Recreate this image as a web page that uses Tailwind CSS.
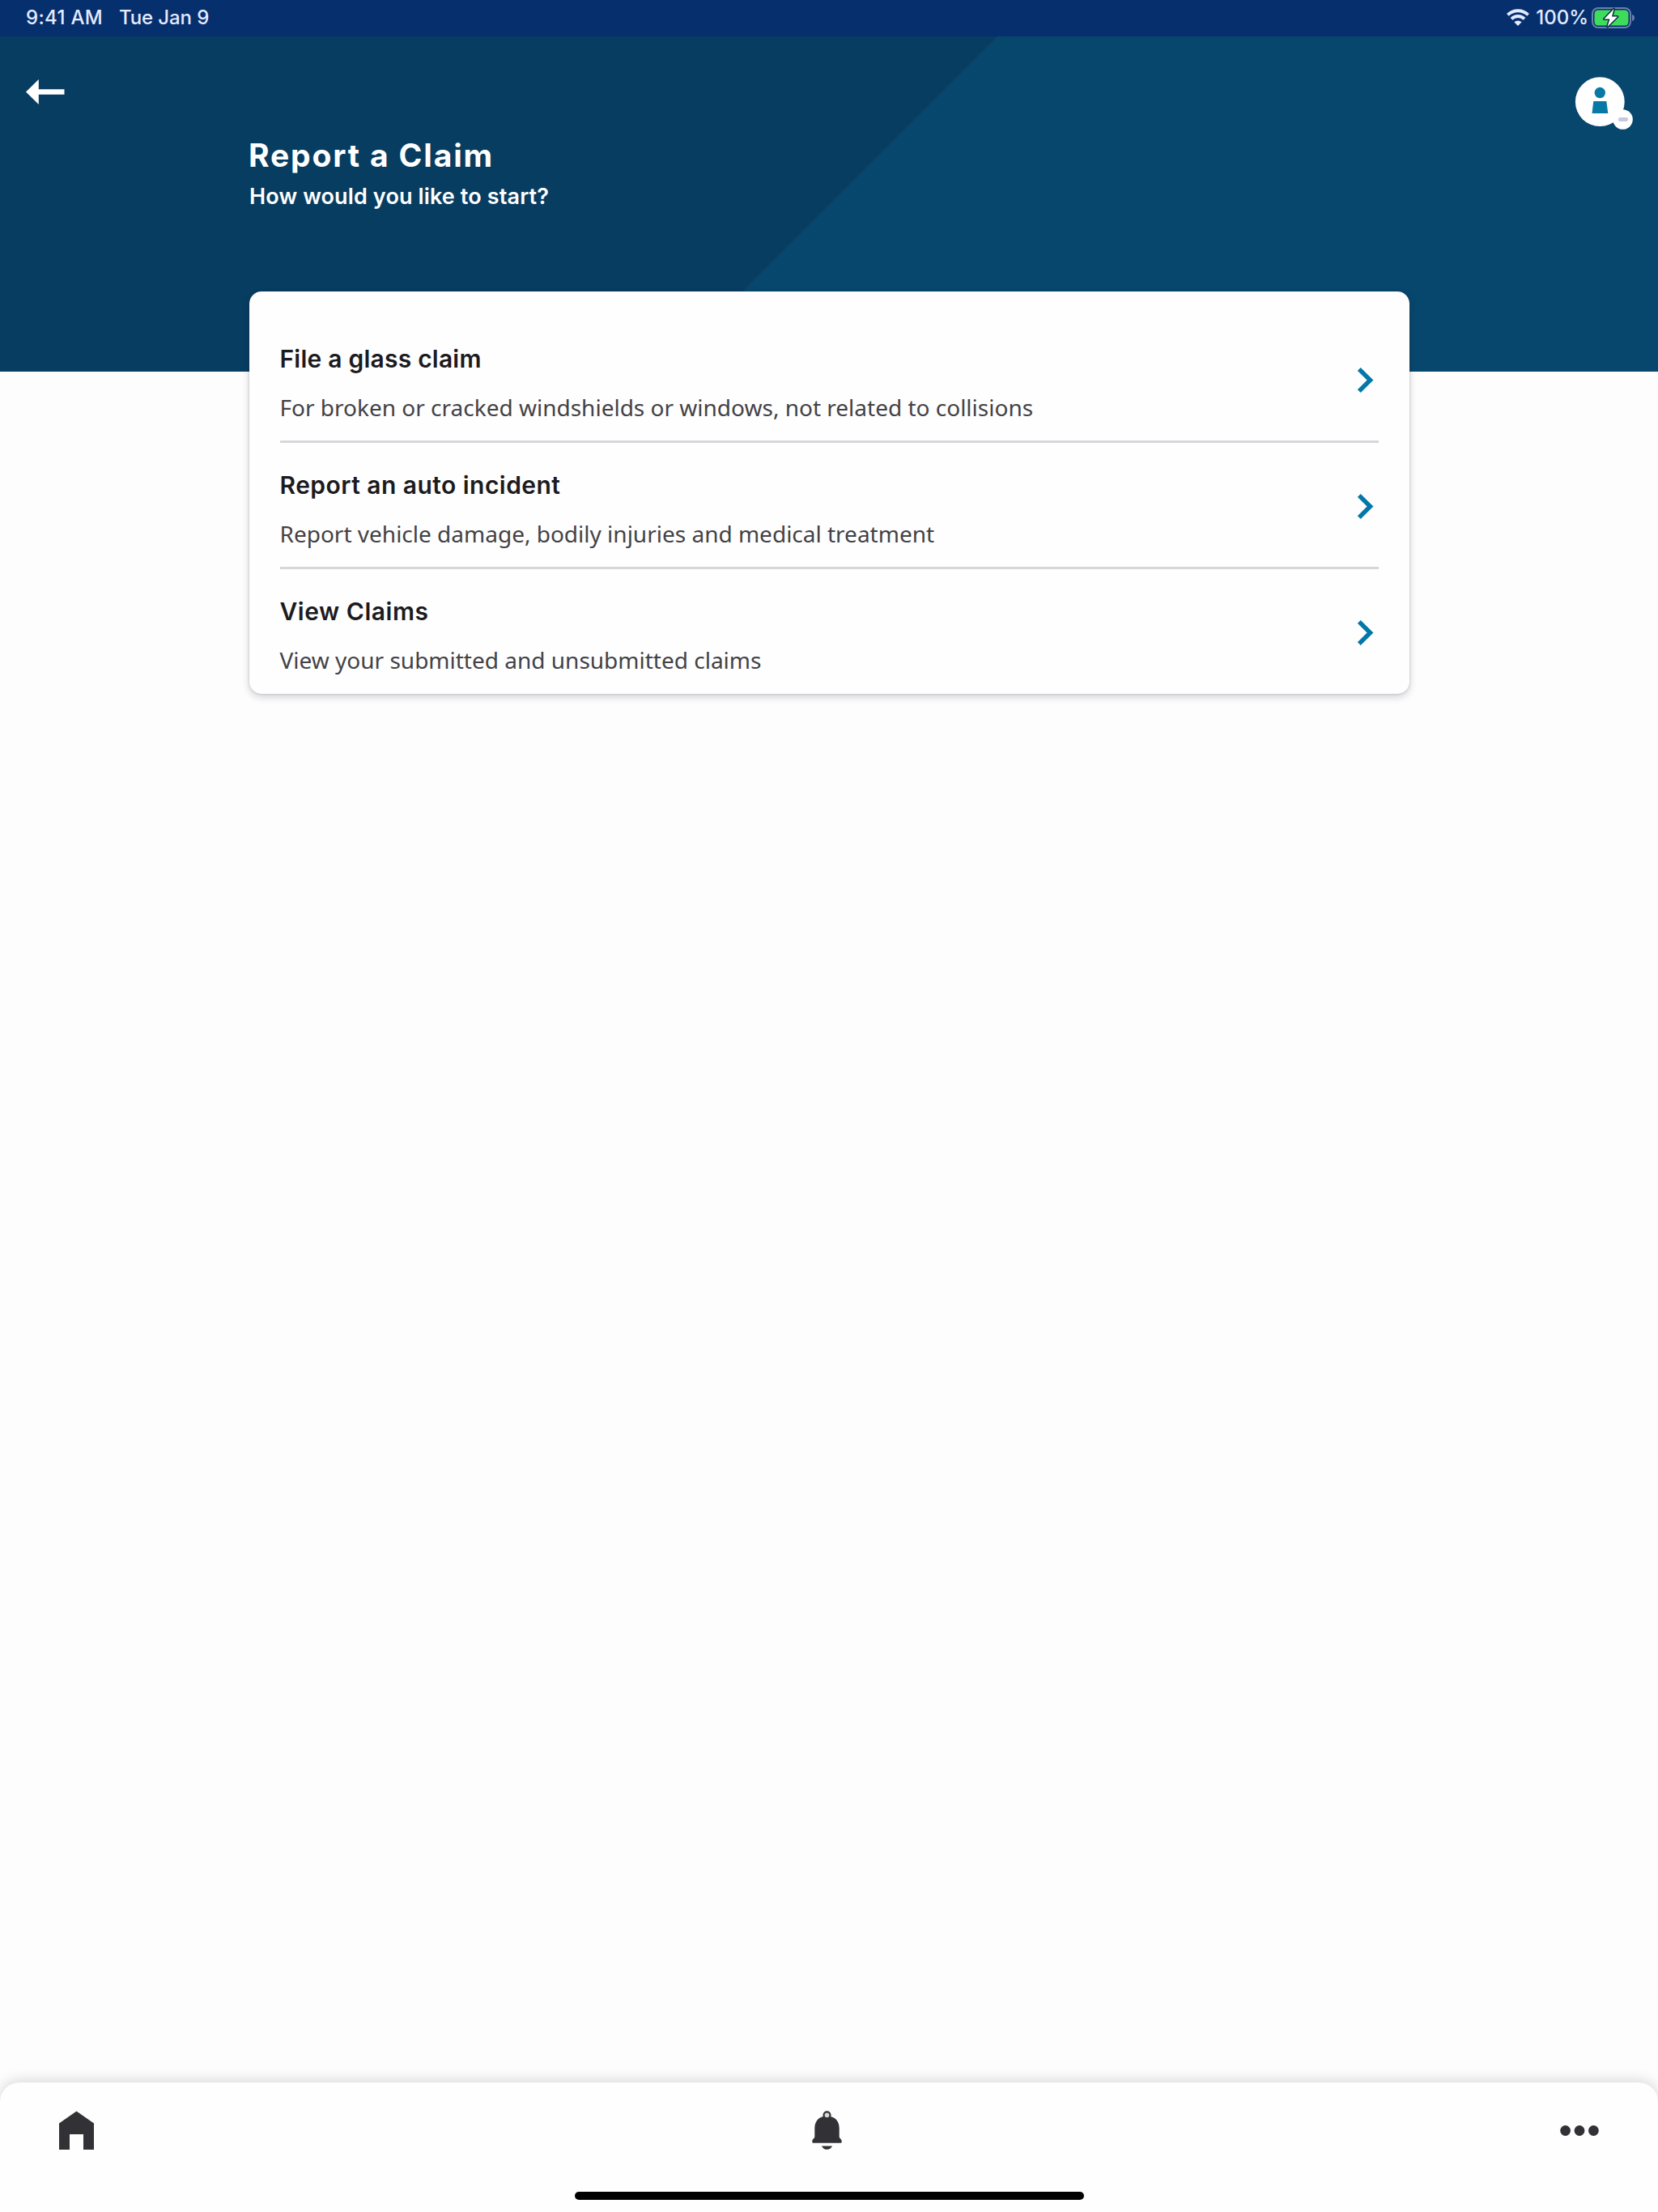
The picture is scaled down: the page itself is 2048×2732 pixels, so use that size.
<!DOCTYPE html>
<html lang="en">
<head>
<meta charset="utf-8">
<title>Report a Claim</title>
<script src="https://cdn.jsdelivr.net/npm/@tailwindcss/browser@4"></script>
</head>
<body class="bg-[#fdfdfd]">
<div class="flex flex-col w-[2048px] h-[2732px] overflow-hidden font-['Inter',sans-serif]">

  <!-- Status bar -->
  <div class="flex h-[45px] shrink-0 items-center justify-between bg-[#062f6e] pl-8 pr-[29px] pb-0.5 text-2xl leading-8 font-medium text-[#e3ebff]">
    <div class="flex gap-5">
      <span class="tracking-[0.3px]">9:41 AM</span>
      <span class="tracking-[-0.1px]">Tue Jan 9</span>
    </div>
    <div class="flex items-center">
      <svg class="w-[28px] h-[21px] mr-2" viewBox="0 0 28 21" fill="none" stroke="currentColor" stroke-width="3.8">
        <path d="M1.4 7.4a18 18 0 0 1 25.2 0"/>
        <path d="M6 12.3a11.4 11.4 0 0 1 16 0"/>
        <path d="M14 21l-4.6-4.7a6.6 6.6 0 0 1 9.2 0z" fill="currentColor" stroke="none"/>
      </svg>
      <span class="mr-1">100%</span>
      <svg class="w-[53px] h-[26px]" viewBox="0 0 53 26">
        <rect x="1" y="1" width="47" height="24" rx="7" fill="#062f6e" stroke="#6d7fae" stroke-width="2"/>
        <rect x="3.5" y="3.5" width="42" height="19" rx="4.5" fill="#3fdc5c"/>
        <path d="M50 9c2 .6 3 2 3 4s-1 3.400-3 4z" fill="#6d7fae"/>
        <path d="M27.500 2L15.500 14.500h7l-3 9.500L32 11.500h-7z" fill="#fff" stroke="#062f3e" stroke-width="3" paint-order="stroke" stroke-linejoin="round"/>
      </svg>
    </div>
  </div>

  <!-- Header -->
  <header class="relative flex h-[414px] shrink-0 bg-[#073d61] text-white">
    <svg class="absolute inset-0 h-full w-full" viewBox="0 0 2048 414"><path d="M1232 0H2048V414H818z" fill="#08476d"/></svg>
    <div class="relative w-[308px] pl-8 pt-[53px]">
      <svg class="h-[31px] w-[48px]" viewBox="0 0 48 31" fill="currentColor"><path d="M0 15.500L15.800 0V12.300H47.500V18.700H15.800V31z"/></svg>
    </div>
    <div class="relative flex-1 pt-[123px]">
      <h1 class="text-[39px] leading-[48px] font-bold tracking-[1.85px] -ml-px">Report a Claim</h1>
      <p class="mt-[9px] text-[27px] leading-9 font-semibold tracking-[0.13px]">How would you like to start?</p>
    </div>
    <div class="relative pt-[50px] pr-[30px]">
      <svg class="h-[66px] w-[73px]" viewBox="0 0 73 66">
        <circle cx="31.300" cy="30.700" r="30.400" fill="#fff"/>
        <circle cx="31.300" cy="19.500" r="6.700" fill="#0879a5"/>
        <path d="M23.300 30H39.300L41.300 45H21.500z" fill="#0879a5"/>
        <circle cx="59.500" cy="52.500" r="12.300" fill="#fff"/>
        <rect x="54" y="50" width="12" height="5" rx="2" fill="#c6c9dd"/>
      </svg>
    </div>
  </header>

  <!-- Claim options -->
  <main class="relative mx-auto -mt-[99px] w-[1433px] rounded-[15px] bg-[#fefefe] px-[38px] pt-[31px] shadow-[0_4px_10px_rgba(40,30,50,0.2),0_0_3px_rgba(40,30,50,0.2)]">
    <a class="flex items-center justify-between border-b-3 border-[#d8d6da] pt-8 pb-[21px]">
      <div>
        <h2 class="text-3xl leading-10 font-semibold tracking-[0.22px] text-[#1c1b1f]">File a glass claim</h2>
        <p class="mt-5 font-['Noto_Sans',sans-serif] text-[28px] leading-10 text-[#434246]">For broken or cracked windshields or windows, not related to collisions</p>
      </div>
      <svg class="mr-1.5 mb-[7px] h-[31px] w-[20px]" viewBox="0 0 20 31" fill="none" stroke="#0378a8" stroke-width="5.500"><path d="M1.800 2L15.500 15.500L1.800 29"/></svg>
    </a>
    <a class="flex items-center justify-between border-b-3 border-[#d8d6da] pt-8 pb-[21px]">
      <div>
        <h2 class="text-3xl leading-10 font-semibold tracking-[0.46px] text-[#1c1b1f]">Report an auto incident</h2>
        <p class="mt-5 font-['Noto_Sans',sans-serif] text-[28px] leading-10 text-[#434246]">Report vehicle damage, bodily injuries and medical treatment</p>
      </div>
      <svg class="mr-1.5 mb-[7px] h-[31px] w-[20px]" viewBox="0 0 20 31" fill="none" stroke="#0378a8" stroke-width="5.500"><path d="M1.800 2L15.500 15.500L1.800 29"/></svg>
    </a>
    <a class="flex items-center justify-between pt-8 pb-[22px]">
      <div>
        <h2 class="text-3xl leading-10 font-semibold tracking-[0.52px] text-[#1c1b1f]">View Claims</h2>
        <p class="mt-5 font-['Noto_Sans',sans-serif] text-[28px] leading-10 text-[#434246]">View your submitted and unsubmitted claims</p>
      </div>
      <svg class="mr-1.5 mb-[7px] h-[31px] w-[20px]" viewBox="0 0 20 31" fill="none" stroke="#0378a8" stroke-width="5.500"><path d="M1.800 2L15.500 15.500L1.800 29"/></svg>
    </a>
  </main>

  <!-- Tab bar -->
  <nav class="mt-auto flex h-[160px] shrink-0 flex-col items-center justify-between rounded-t-[24px] bg-[#fefefe] pt-[35px] pb-[15px] shadow-[0_-2px_16px_rgba(40,30,50,0.18)]">
    <div class="flex w-full items-center justify-between px-[73px] text-[#323135]">
      <svg class="h-[48px] w-[43px]" viewBox="0 0 43 48" fill="currentColor"><path d="M21.500 .5L43 15.500V48H30V29H13V48H0V15.500z"/></svg>
      <svg class="h-[48px] w-[37px]" viewBox="0 0 37 48" fill="currentColor">
        <path d="M18.500 6.500C8.500 6.500 3.300 13 3.300 21.500V32C3.300 34 .3 35 .3 37.500V38.500Q.3 39.800 1.600 39.800H35.400Q36.700 39.800 36.700 38.500V37.500C36.700 35 33.700 34 33.700 32V21.500C33.700 13 28.500 6.500 18.500 6.500z"/>
        <path d="M12 43.500H25C23.500 46.500 21.500 47.800 18.500 47.800S13.500 46.500 12 43.500z"/>
        <circle cx="18.500" cy="5.300" r="4" fill="#d8d8da" stroke="currentColor" stroke-width="2.200"/>
      </svg>
      <svg class="h-[13px] w-[48px]" viewBox="0 0 48 13" fill="currentColor"><circle cx="6.600" cy="6.500" r="6.400"/><circle cx="24" cy="6.500" r="6.400"/><circle cx="41.400" cy="6.500" r="6.400"/></svg>
    </div>
    <div class="h-[10px] w-[629px] rounded-full bg-black"></div>
  </nav>
</div>
</body>
</html>
